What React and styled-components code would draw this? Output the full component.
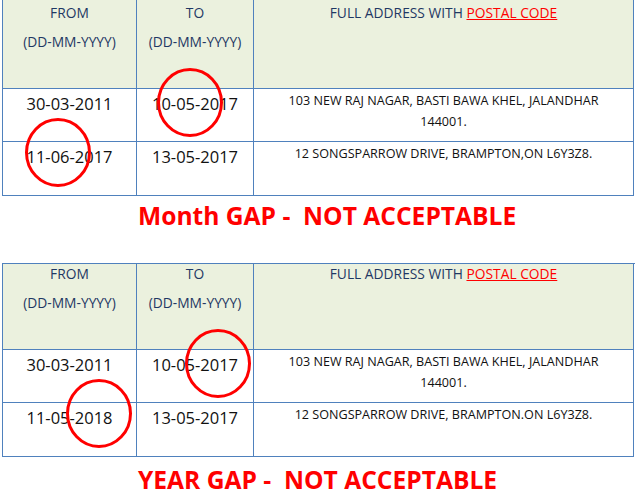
import React from "react";
import styled, { createGlobalStyle } from "styled-components";

const GlobalStyle = createGlobalStyle`
  html, body {
    margin: 0;
    padding: 0;
    background: #fff;
  }
  body {
    font-family: "Open Sans", "Liberation Sans", sans-serif;
  }
`;

const Page = styled.div`
  position: relative;
  width: 639px;
  height: 500px;
  overflow: hidden;
  background: #fff;
`;

const Section = styled.div`
  display: flex;
  flex-direction: column;
  padding-left: 2px;
`;

const Table = styled.div`
  display: grid;
  grid-template-columns: 134px 117px 380px;
  width: 632px;
  border-left: 1px solid #4f81bd;
  border-top: ${(p) => (p.$noTop ? "none" : "1px solid #4f81bd")};
`;

const Cell = styled.div`
  box-sizing: border-box;
  height: ${(p) => p.$h}px;
  border-right: 1px solid #4f81bd;
  border-bottom: 1px solid #4f81bd;
  background: ${(p) => (p.$head ? "#ebf1de" : "#fff")};
  display: flex;
  flex-direction: column;
  align-items: center;
  padding-top: ${(p) => p.$pt || 0}px;
`;

const HeadLine = styled.div`
  font-size: 13.8px;
  color: #1f3864;
  line-height: 18px;
  white-space: nowrap;
  margin-bottom: 11px;
`;

const PostalCode = styled.span`
  color: #ff0000;
  text-decoration: underline;
`;

const DateText = styled.div`
  font-size: 16.5px;
  color: #111;
  line-height: 20px;
  white-space: nowrap;
`;

const Address = styled.div`
  font-size: 12.6px;
  color: #111;
  line-height: 21px;
  text-align: center;
  width: 350px;
`;

const Title = styled.div`
  height: ${(p) => p.$h}px;
  box-sizing: border-box;
  padding-left: 136px;
  padding-top: ${(p) => p.$pt}px;
  font-family: "Open Sans", "Liberation Sans", sans-serif;
  font-weight: 700;
  font-size: 24.6px;
  line-height: 28px;
  color: #ff0000;
  white-space: pre;
`;

const Circle = styled.svg`
  position: absolute;
  left: ${(p) => p.$x}px;
  top: ${(p) => p.$y}px;
  width: 66px;
  height: 69px;
  pointer-events: none;
`;

const Mark = ({ x, y }) => (
  <Circle $x={x} $y={y} viewBox="0 0 66 69">
    <ellipse cx="33" cy="34.5" rx="31.5" ry="33" fill="none" stroke="#ff0000" strokeWidth="3" />
  </Circle>
);

const HeaderRow = ({ h, pt }) => (
  <>
    <Cell $head $h={h} $pt={pt}>
      <HeadLine>FROM</HeadLine>
      <HeadLine>(DD-MM-YYYY)</HeadLine>
    </Cell>
    <Cell $head $h={h} $pt={pt}>
      <HeadLine>TO</HeadLine>
      <HeadLine>(DD-MM-YYYY)</HeadLine>
    </Cell>
    <Cell $head $h={h} $pt={pt}>
      <HeadLine>
        FULL ADDRESS WITH <PostalCode>POSTAL CODE</PostalCode>
      </HeadLine>
    </Cell>
  </>
);

const DataRow = ({ from, to, address, h }) => (
  <>
    <Cell $h={h} $pt={5}>
      <DateText>{from}</DateText>
    </Cell>
    <Cell $h={h} $pt={5}>
      <DateText>{to}</DateText>
    </Cell>
    <Cell $h={h} $pt={1}>
      <Address>{address}</Address>
    </Cell>
  </>
);

const GapTable = ({ noTop, headH, headPt, rows, title, titleH, titlePt }) => (
  <Section>
    <Table $noTop={noTop}>
      <HeaderRow h={headH} pt={headPt} />
      {rows.map((r, i) => (
        <DataRow key={i} {...r} />
      ))}
    </Table>
    <Title $h={titleH} $pt={titlePt}>
      {title}
    </Title>
  </Section>
);

export default function App() {
  return (
    <Page>
      <GlobalStyle />
      <GapTable
        noTop
        headH={89}
        headPt={4}
        titleH={67}
        titlePt={6}
        title="Month GAP -  NOT ACCEPTABLE"
        rows={[
          { from: "30-03-2011", to: "10-05-2017", h: 53, address: "103 NEW RAJ NAGAR, BASTI BAWA KHEL, JALANDHAR 144001." },
          { from: "11-06-2017", to: "13-05-2017", h: 54, address: "12 SONGSPARROW DRIVE, BRAMPTON,ON L6Y3Z8." },
        ]}
      />
      <GapTable
        headH={86}
        headPt={1}
        titleH={43}
        titlePt={9}
        title="YEAR GAP -  NOT ACCEPTABLE"
        rows={[
          { from: "30-03-2011", to: "10-05-2017", h: 53, address: "103 NEW RAJ NAGAR, BASTI BAWA KHEL, JALANDHAR 144001." },
          { from: "11-05-2018", to: "13-05-2017", h: 54, address: "12 SONGSPARROW DRIVE, BRAMPTON.ON L6Y3Z8." },
        ]}
      />
      <Mark x={157} y={68} />
      <Mark x={25} y={118} />
      <Mark x={185} y={329} />
      <Mark x={66} y={379} />
    </Page>
  );
}
